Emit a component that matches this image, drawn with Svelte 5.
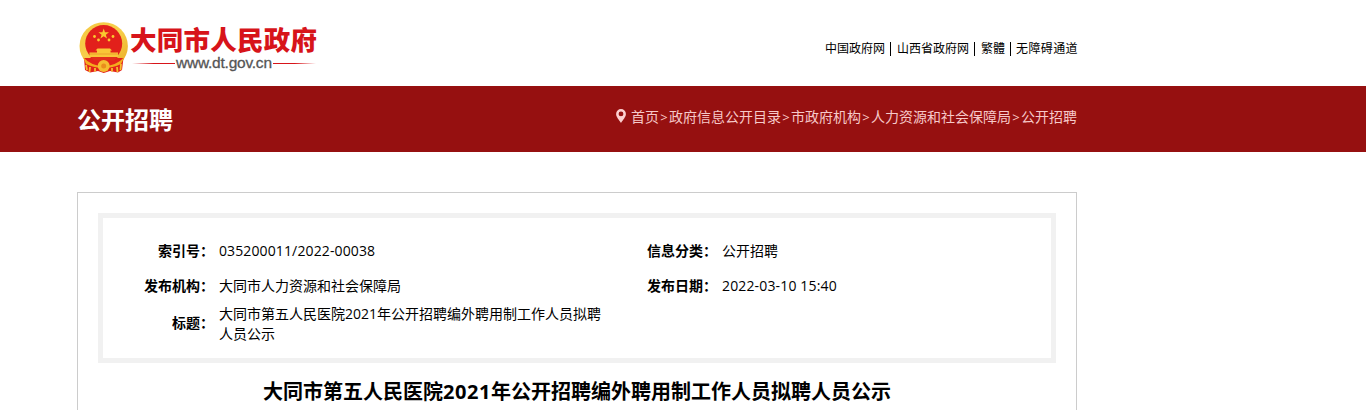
<script>
  const links = [['中国政府网', 60], ['山西省政府网', 72], ['繁體', 24], ['无障碍通道', 62]];
  const crumbs = ['首页', '政府信息公开目录', '市政府机构', '人力资源和社会保障局', '公开招聘'];
</script>

<header>
  <svg class="logo" width="244" height="60" viewBox="76 18 244 60" role="img" aria-label="大同市人民政府">
    <defs>
      <linearGradient id="gold" x1="0" y1="0" x2="1" y2="1">
        <stop offset="0" stop-color="#f5c842" /><stop offset=".5" stop-color="#f7cf4b" /><stop offset="1" stop-color="#e9a922" />
      </linearGradient>
      <linearGradient id="left"><stop offset="0" stop-color="#d7141a" stop-opacity="0" /><stop offset=".5" stop-color="#d7141a" /></linearGradient>
      <linearGradient id="right"><stop offset=".5" stop-color="#d7141a" /><stop offset="1" stop-color="#d7141a" stop-opacity="0" /></linearGradient>
    </defs>
    <ellipse cx="103.700" cy="46" rx="24.200" ry="23.800" fill="url(#gold)" />
    <path d="M84 58L85 70L90 72.500L98 71L103.700 73L110 71L118 72.500L122 70L123.500 58Z" fill="#e3231b" />
    <path d="M83 57Q91 66 103.700 66Q116 66 124.500 57L121 64Q113 68 103.700 68Q94 68 86 64Z" fill="#f3ab1e" />
    <path d="M86 65L87 70M90 67L89.500 72M95 68L95 71.500M112 68V71.500M117 67L117.500 72M121 64L120.500 70" stroke="#f6bd2c" stroke-width="1.800" />
    <circle cx="103.700" cy="43.500" r="18.500" fill="#e2201b" />
    <path d="M103.700 28.500L105 32.300H109L105.800 34.700L107 38.500L103.700 36.200L100.400 38.500L101.600 34.700L98.400 32.300H102.400Z" fill="#f9c92f" />
    <g fill="#f9c92f"><circle cx="94.500" cy="36.500" r="1.400" /><circle cx="98.500" cy="40" r="1.400" /><circle cx="109" cy="40" r="1.400" /><circle cx="113" cy="36.500" r="1.400" /></g>
    <path d="M95.500 50.500L97.500 48.500H110L112 50.500H110.500V52.500H118V57H89.500V52.500H97V50.500Z" fill="#f9c737" />
    <path d="M89.500 54H118" stroke="#e8902a" stroke-width=".7" />
    <path d="M90 57H118L114 60.500H94Z" fill="#e2301b" />
    <circle cx="103.700" cy="66" r="6" fill="#f5bd30" /><circle cx="103.700" cy="66" r="2.500" fill="#ea8d1c" />
    <text x="130" y="50" class="logo-name" textLength="187">大同市人民政府</text>
    <rect x="132" y="63" width="43" height="1" fill="url(#left)" />
    <rect x="273" y="63" width="43" height="1" fill="url(#right)" />
    <text x="176" y="68" class="logo-url" textLength="96">www.dt.gov.cn</text>
  </svg>
  <nav class="links">
    {#each links as [name, width], i}
      {#if i}<i></i>{/if}<a style="width:{width}px">{name}</a>
    {/each}
  </nav>
</header>

<section class="band">
  <div class="inner">
    <h1>公开招聘</h1>
    <nav class="crumbs">
      <svg width="10" height="14" viewBox="0 0 10 14"><path fill-rule="evenodd" d="M5 0A4.900 4.900 0 0 0 .1 4.900C.1 8 3 10.500 5 14C7 10.500 9.900 8 9.900 4.900A4.900 4.900 0 0 0 5 0ZM5 2.500A2.400 2.400 0 1 1 5 7.300A2.400 2.400 0 0 1 5 2.500Z" fill="#fcd0d0" /></svg>
      {#each crumbs as c, i}{#if i}<b>&gt;</b>{/if}<a>{c}</a>{/each}
    </nav>
  </div>
</section>

<main>
  <dl>
    <dt>索引号：</dt><dd class="num">035200011/2022-00038</dd>
    <dt>信息分类：</dt><dd>公开招聘</dd>
    <dt>发布机构：</dt><dd>大同市人力资源和社会保障局</dd>
    <dt>发布日期：</dt><dd class="date">2022-03-10 15:40</dd>
    <dt class="tall">标题：</dt><dd>大同市第五人民医院2021年公开招聘编外聘用制工作人员拟聘人员公示</dd>
  </dl>
  <h2>大同市第五人民医院<span>2021</span>年公开招聘编外聘用制工作人员拟聘人员公示</h2>
</main>

<style>
  :global(body) {
    background: #fff;
    color: #000;
    font: 14px/20px "Open Sans", "Noto Sans CJK SC", sans-serif;
    overflow: hidden;
  }
  header {
    width: 1001px;
    height: 86px;
    margin-left: 77px;
    display: flex;
    justify-content: space-between;
    box-sizing: border-box;
    padding-top: 18px;
  }
  .logo { margin-left: -1px; }
  .logo-name { font: 900 26.500px/1 "Noto Sans CJK SC", sans-serif; fill: #d7141a; }
  .logo-url { font: 15.500px "Liberation Sans", sans-serif; fill: #555; stroke: #555; stroke-width: .3px; }
  .links { display: flex; height: 20px; margin-top: 21px; font-size: 12px; align-items: center; }
  .links a { white-space: nowrap; }
  .links a:last-child { letter-spacing: .4px; }
  .links i { width: 1px; height: 14px; background: #000; margin: 0 6px 0 5px; }
  .links i:last-of-type { margin-right: 5px; }
  .band { height: 66px; background: #961010; }
  .inner { width: 1000px; margin-left: 77px; display: flex; justify-content: space-between; }
  h1 { margin: 14px 0 0; font-size: 24px; line-height: 40px; color: #fff; }
  .crumbs { display: flex; height: 20px; margin-top: 21px; color: #f6c9c9; }
  .crumbs svg { margin: 2px 5px 0 0; }
  .crumbs b { width: 10px; font-weight: 400; text-align: center; font-size: 13px; }
  main { width: 998px; height: 217px; margin: 40px 0 0 77px; border: 1px solid #ccc; border-bottom: 0; }
  dl {
    width: 958px;
    height: 150px;
    margin: 20px 0 0 20px;
    border: 5px solid #f1f1f1;
    display: grid;
    grid-template-columns: 111px 392px 111px 1fr;
    grid-template-rows: 35px 35px 41px;
    align-content: start;
    align-items: center;
    padding-top: 15px;
    box-sizing: border-box;
  }
  dt { text-align: right; font-weight: 700; }
  dt.tall { padding-bottom: 2px; }
  dd { margin: 0 0 0 5px; }
  .num { letter-spacing: .12px; }
  .date { letter-spacing: .15px; }
  h2 { margin: 14px 0 0; font-size: 20px; line-height: 30px; text-align: center; white-space: nowrap; }
  h2 span { letter-spacing: .57px; }
</style>
